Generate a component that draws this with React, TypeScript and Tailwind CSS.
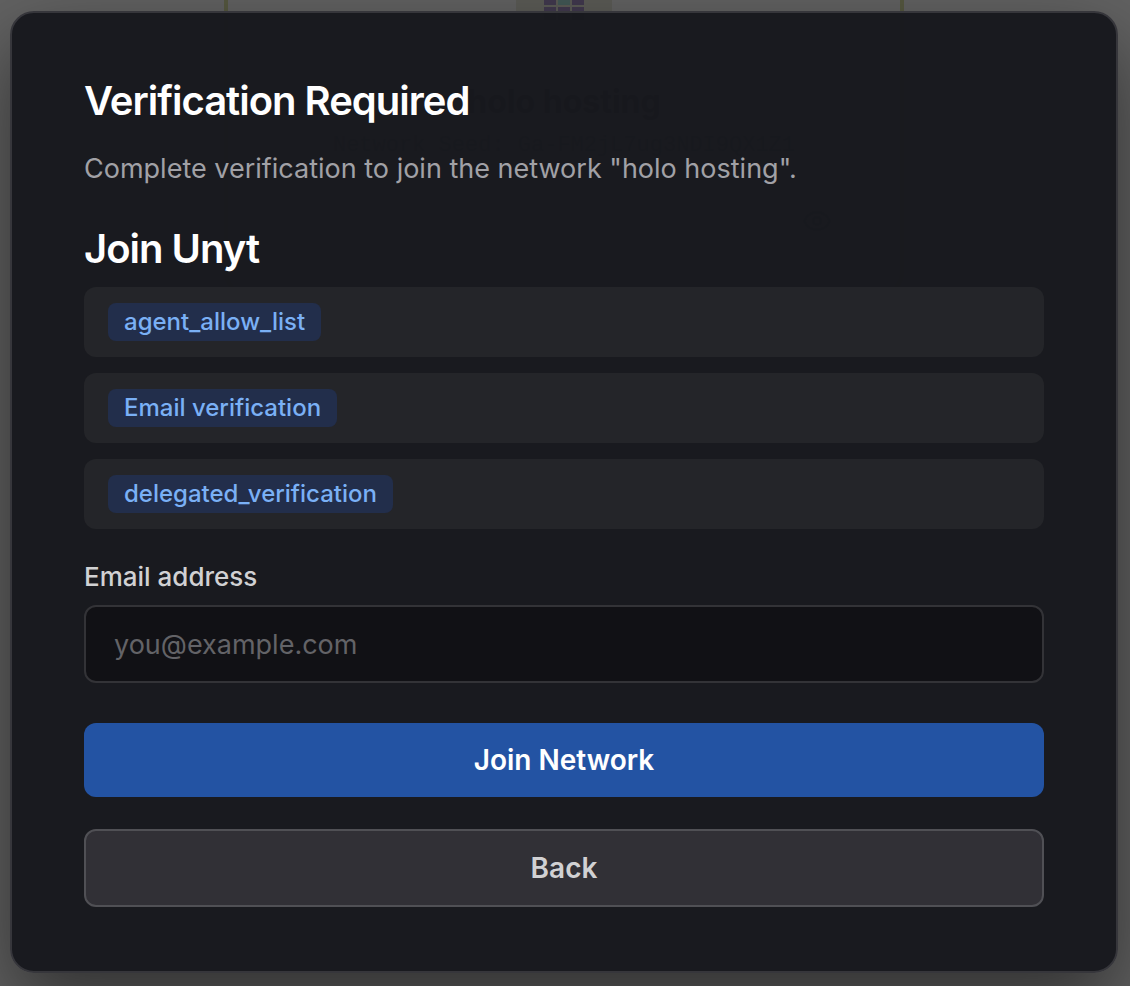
import React, { useState } from 'react';
import { Eye } from 'lucide-react';

const checks = ['agent_allow_list', 'Email verification', 'delegated_verification'];

function NetworkCard() {
  return (
    <div className="mx-auto w-[680px] h-[296px] rounded-b-3xl border-x-4 border-b-4 border-[#d6dba0] flex flex-col items-center text-gray-800">
      <div className="w-24 h-5 shrink-0 bg-[#e4e4d8] flex justify-center">
        <svg width="40" height="20" viewBox="0 0 40 20" aria-hidden="true">
          <path fill="#a48fc4" d="M0 0h12v5H0zM28 0h12v5H28zM0 7h12v13H0zM14 7h12v13H14zM28 7h12v13H28z" />
          <path fill="#a6dcd4" d="M14 0h12v5H14z" />
        </svg>
      </div>
      <h1 className="mt-[62px] text-[32px] leading-[40px] font-bold">holo hosting</h1>
      <p className="mt-3 font-['Liberation_Mono',monospace] text-[22px] leading-6 text-gray-500">
        Network Seed: Ga-FM2jL7ug3NDI9QX1Z1
      </p>
      <Eye className="mt-12 mr-[68px] self-end text-gray-500" size={30} />
    </div>
  );
}

function VerificationDialog() {
  const [email, setEmail] = useState('');

  const submit = (e: React.FormEvent) => {
    e.preventDefault();
  };

  return (
    <div
      role="dialog"
      aria-labelledby="dialog-title"
      className="w-full rounded-3xl border-2 border-[#36363b] bg-[#17181e]/98 px-[72px] py-16 shadow-[0_32px_80px_rgba(0,0,0,0.5)]"
    >
      <h2 id="dialog-title" className="text-[40px] leading-[48px] font-semibold tracking-tight text-white">
        Verification Required
      </h2>
      <p className="mt-6 text-[27px] leading-10 text-[#a1a1a6]">
        Complete verification to join the network "holo hosting".
      </p>
      <h3 className="mt-9 text-[40px] leading-[48px] font-semibold tracking-tight text-white">Join Unyt</h3>
      <ul className="mt-[14px] space-y-4">
        {checks.map(check => (
          <li key={check} className="flex rounded-xl bg-[#242529] px-6 py-4">
            <span className="rounded-lg bg-[#222e4b] px-4 text-2xl leading-[38px] font-medium text-[#7ab0f5]">{check}</span>
          </li>
        ))}
      </ul>
      <form onSubmit={submit}>
        <label htmlFor="email" className="mt-8 block text-[26px] leading-8 font-medium text-[#d1d1d3]">
          Email address
        </label>
        <input
          id="email"
          type="email"
          value={email}
          onChange={e => setEmail(e.target.value)}
          placeholder="you@example.com"
          className="mt-3 block h-[78px] w-full rounded-xl border-2 border-[#333337] bg-[#111115] px-7 text-[27px] text-white placeholder:text-[#636367]"
        />
        <button type="submit" className="mt-10 h-[74px] w-full rounded-xl bg-[#2353a3] text-[28px] font-semibold text-white">
          Join Network
        </button>
        <button type="button" className="mt-8 block h-[78px] w-full rounded-xl border-2 border-[#505055] bg-[#313036] text-[28px] font-semibold text-[#d1d1d3]">
          Back
        </button>
      </form>
    </div>
  );
}

export default function App() {
  return (
    <div className="relative min-h-screen bg-[#f6f6f6] pr-0.5 font-[Inter,sans-serif]">
      <NetworkCard />
      <div className="absolute inset-0 bg-black/60 pt-[11px] pr-3 pl-[10px]">
        <VerificationDialog />
      </div>
    </div>
  );
}
